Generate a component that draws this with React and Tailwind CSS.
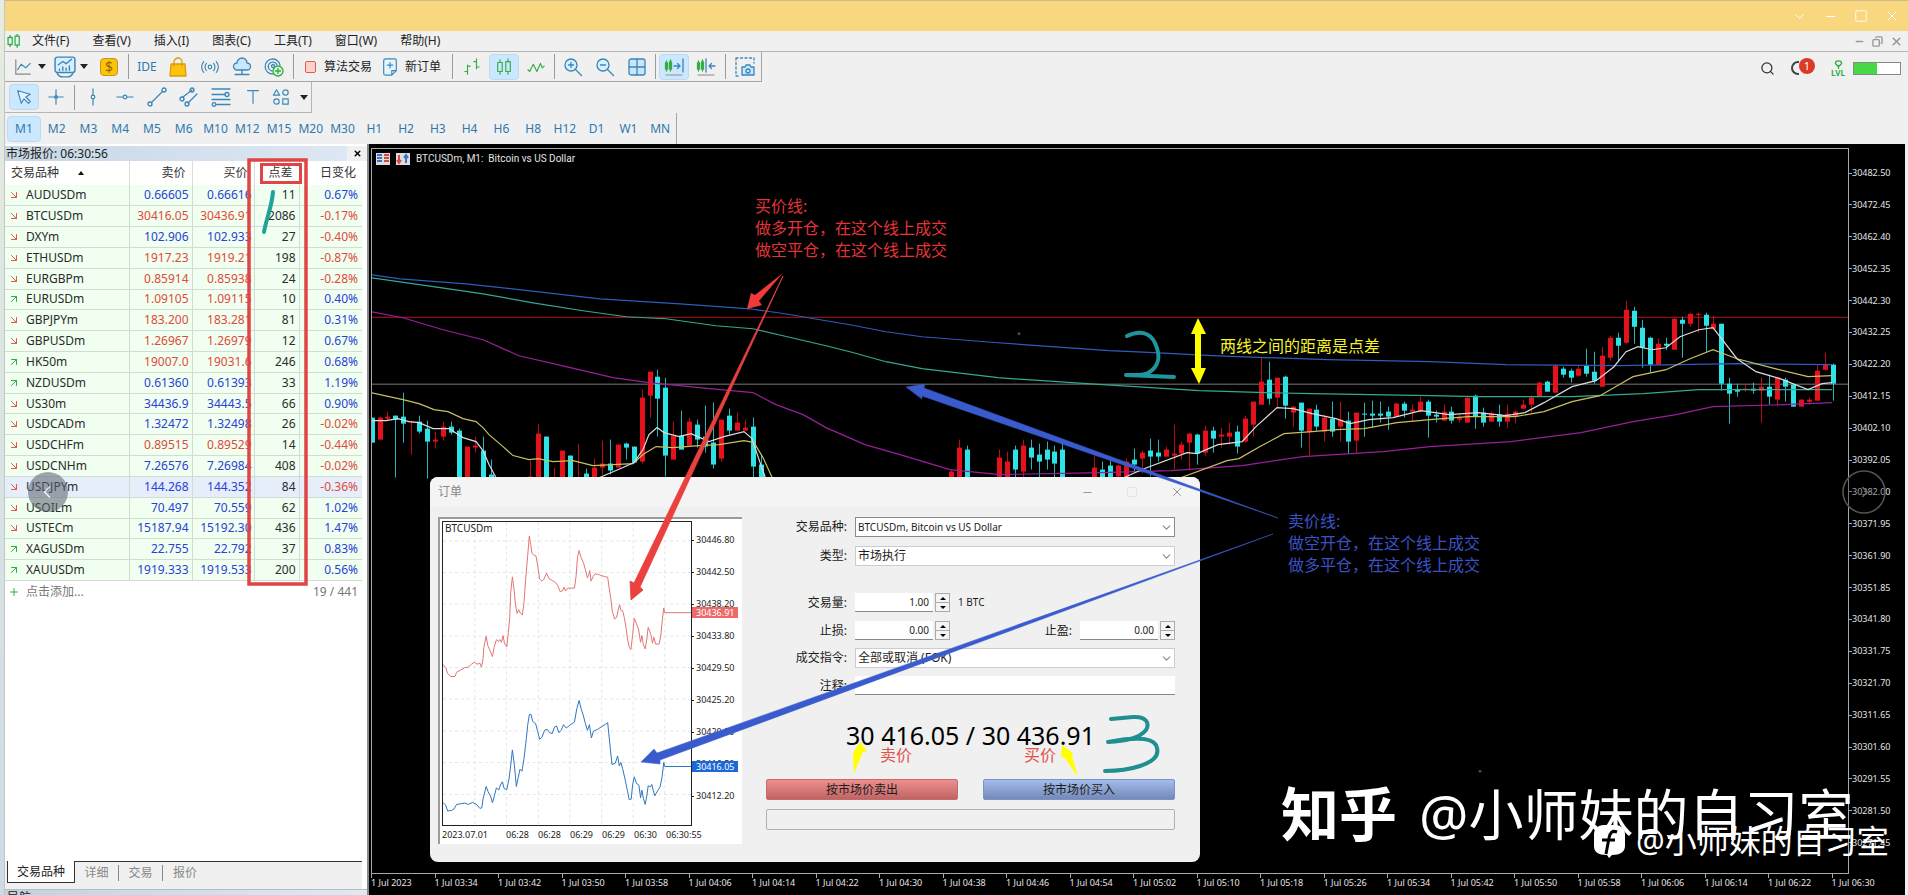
import React, { useState } from 'react';
import { ChevronDown, ChevronLeft, ChevronRight, Minus, Square, X, Copy, Search, ArrowDownRight, ArrowUpRight, Plus } from 'lucide-react';

const MENU = ['文件(F)', '查看(V)', '插入(I)', '图表(C)', '工具(T)', '窗口(W)', '帮助(H)'];
const TIMEFRAMES = ['M1', 'M2', 'M3', 'M4', 'M5', 'M6', 'M10', 'M12', 'M15', 'M20', 'M30', 'H1', 'H2', 'H3', 'H4', 'H6', 'H8', 'H12', 'D1', 'W1', 'MN'];

// symbol, direction, bid, ask, price colour, spread, daily change
const QUOTES = [
    ['AUDUSDm', 'down', '0.66605', '0.66616', 'blue', '11', '0.67%'],
    ['BTCUSDm', 'down', '30416.05', '30436.91', 'red', '2086', '-0.17%'],
    ['DXYm', 'down', '102.906', '102.933', 'blue', '27', '-0.40%'],
    ['ETHUSDm', 'down', '1917.23', '1919.21', 'red', '198', '-0.87%'],
    ['EURGBPm', 'down', '0.85914', '0.85938', 'red', '24', '-0.28%'],
    ['EURUSDm', 'up', '1.09105', '1.09115', 'red', '10', '0.40%'],
    ['GBPJPYm', 'down', '183.200', '183.281', 'red', '81', '0.31%'],
    ['GBPUSDm', 'down', '1.26967', '1.26979', 'red', '12', '0.67%'],
    ['HK50m', 'up', '19007.0', '19031.6', 'red', '246', '0.68%'],
    ['NZDUSDm', 'up', '0.61360', '0.61393', 'blue', '33', '1.19%'],
    ['US30m', 'down', '34436.9', '34443.5', 'blue', '66', '0.90%'],
    ['USDCADm', 'down', '1.32472', '1.32498', 'blue', '26', '-0.02%'],
    ['USDCHFm', 'down', '0.89515', '0.89529', 'red', '14', '-0.44%'],
    ['USDCNHm', 'down', '7.26576', '7.26984', 'blue', '408', '-0.02%'],
    ['USDJPYm', 'down', '144.268', '144.352', 'blue', '84', '-0.36%'],
    ['USOILm', 'down', '70.497', '70.559', 'blue', '62', '1.02%'],
    ['USTECm', 'down', '15187.94', '15192.30', 'blue', '436', '1.47%'],
    ['XAGUSDm', 'up', '22.755', '22.792', 'blue', '37', '0.83%'],
    ['XAUUSDm', 'up', '1919.333', '1919.533', 'blue', '200', '0.56%'],
];

const PRICES = ['30482.50', '30472.45', '30462.40', '30452.35', '30442.30', '30432.25', '30422.20', '30412.15', '30402.10', '30392.05', '30382.00', '30371.95', '30361.90', '30351.85', '30341.80', '30331.75', '30321.70', '30311.65', '30301.60', '30291.55', '30281.50', '30271.45'];

const TIMES = ['1 Jul 2023'];
for (let m = 3 * 60 + 34; m <= 6 * 60 + 30; m += 8) {
    TIMES.push(`1 Jul 0${Math.floor(m / 60)}:${String(m % 60).padStart(2, '0')}`);
}

// index, high, body top, body bottom, low, 1 = rising
const CANDLES = [
    [0, 418, 418, 443, 443, 0], [1, 417, 418, 440, 440, 1], [2, 412, 417, 419, 421, 1], [3, 416, 416, 420, 478, 0],
    [4, 393, 417, 424, 443, 0], [5, 421, 422, 423, 455, 1], [6, 416, 422, 432, 434, 0], [7, 421, 429, 442, 479, 0],
    [8, 432, 440, 442, 449, 1], [9, 422, 427, 437, 441, 1], [10, 422, 427, 433, 435, 0], [11, 429, 431, 480, 480, 0],
    [12, 447, 447, 480, 480, 1], [13, 437, 446, 448, 453, 1], [14, 437, 451, 480, 480, 0], [15, 460, 475, 480, 480, 0],
    [20, 461, 477, 480, 480, 1], [21, 424, 434, 480, 480, 1], [22, 437, 437, 480, 480, 0], [23, 468, 478, 480, 480, 1],
    [24, 451, 451, 480, 480, 1], [25, 456, 456, 480, 480, 0], [26, 444, 478, 480, 480, 1], [27, 469, 474, 480, 480, 0],
    [28, 459, 468, 480, 480, 1], [29, 441, 464, 468, 475, 1], [30, 440, 464, 471, 475, 0], [31, 445, 445, 468, 468, 1],
    [32, 443, 444, 448, 460, 0], [33, 447, 447, 463, 463, 0], [34, 390, 398, 462, 464, 1], [35, 372, 372, 396, 418, 1],
    [36, 370, 377, 399, 437, 0], [37, 378, 388, 456, 477, 0], [38, 422, 436, 460, 460, 1], [39, 411, 436, 450, 450, 0],
    [40, 418, 422, 446, 446, 1], [41, 420, 425, 440, 448, 0], [42, 406, 437, 447, 453, 0], [43, 403, 443, 465, 469, 0],
    [44, 420, 420, 459, 462, 1], [45, 409, 416, 431, 435, 0], [46, 413, 423, 431, 431, 1], [47, 420, 428, 431, 431, 1],
    [48, 418, 427, 467, 480, 0], [49, 455, 465, 480, 480, 0],
    [73, 470, 472, 480, 480, 1], [74, 440, 448, 480, 480, 1], [75, 446, 450, 480, 480, 0], [79, 450, 458, 480, 480, 1],
    [80, 452, 462, 480, 480, 1], [81, 446, 450, 470, 480, 0], [82, 440, 446, 472, 480, 1], [83, 440, 448, 458, 470, 0],
    [84, 444, 455, 462, 480, 0], [85, 442, 450, 460, 470, 0], [86, 446, 452, 464, 480, 0], [87, 440, 450, 480, 480, 0],
    [91, 455, 468, 480, 480, 1], [92, 462, 470, 480, 480, 0], [93, 458, 466, 480, 480, 0],
    [94, 465, 466, 477, 480, 1], [95, 459, 462, 480, 480, 1], [96, 449, 460, 465, 473, 0], [97, 451, 453, 459, 474, 1],
    [98, 439, 451, 457, 477, 0], [99, 440, 453, 457, 462, 0], [100, 447, 450, 457, 457, 1], [101, 425, 454, 456, 470, 1],
    [102, 442, 445, 454, 460, 1], [103, 433, 434, 443, 471, 1], [104, 434, 435, 454, 465, 0], [105, 426, 431, 453, 456, 1],
    [106, 427, 431, 439, 453, 0], [107, 428, 435, 437, 448, 1], [108, 423, 433, 437, 445, 1], [109, 426, 432, 447, 454, 0],
    [110, 416, 419, 442, 443, 1], [111, 402, 402, 425, 437, 1], [112, 357, 382, 405, 405, 1], [113, 362, 380, 399, 405, 0],
    [114, 378, 378, 398, 408, 1], [115, 376, 377, 406, 419, 0], [116, 406, 407, 413, 427, 1], [117, 403, 403, 431, 448, 0],
    [118, 409, 409, 432, 456, 1], [119, 405, 410, 427, 431, 0], [120, 415, 418, 432, 442, 1], [121, 402, 419, 432, 437, 0],
    [122, 402, 420, 427, 442, 1], [123, 412, 421, 442, 454, 0], [124, 413, 413, 441, 453, 1], [125, 403, 414, 415, 437, 0],
    [126, 401, 414, 416, 428, 0], [127, 402, 414, 416, 423, 0], [128, 407, 412, 417, 430, 0], [129, 403, 404, 417, 417, 1],
    [130, 402, 404, 411, 418, 0], [131, 405, 410, 412, 422, 1], [132, 397, 402, 412, 412, 1], [133, 400, 402, 416, 438, 0],
    [134, 411, 415, 417, 423, 0], [135, 405, 412, 421, 421, 1], [136, 407, 412, 421, 424, 0], [137, 415, 418, 420, 423, 1],
    [138, 398, 398, 423, 423, 1], [139, 395, 396, 417, 429, 0], [140, 408, 413, 423, 427, 0], [141, 412, 414, 422, 422, 1],
    [142, 405, 415, 422, 427, 0], [143, 405, 414, 422, 428, 1], [144, 411, 412, 417, 424, 1], [145, 400, 405, 409, 409, 1],
    [146, 396, 398, 405, 413, 1], [147, 382, 383, 397, 397, 1], [148, 381, 382, 392, 392, 0], [149, 365, 366, 393, 393, 1],
    [150, 367, 369, 375, 378, 0], [151, 369, 371, 378, 383, 0], [152, 366, 369, 376, 377, 1], [153, 349, 366, 374, 377, 0],
    [154, 352, 372, 381, 384, 0], [155, 347, 356, 387, 387, 1], [156, 336, 338, 358, 361, 1], [157, 333, 338, 346, 362, 0],
    [158, 301, 310, 343, 344, 1], [159, 307, 311, 327, 344, 0], [160, 320, 328, 348, 368, 0], [161, 337, 338, 365, 373, 0],
    [162, 339, 344, 365, 365, 1], [163, 338, 344, 346, 350, 0], [164, 318, 319, 350, 350, 1], [165, 317, 320, 324, 358, 0],
    [166, 313, 314, 324, 327, 1], [167, 313, 314, 315, 333, 1], [168, 313, 315, 326, 352, 0], [169, 316, 324, 329, 330, 1],
    [170, 324, 324, 384, 391, 0], [171, 378, 384, 394, 424, 0], [172, 384, 390, 392, 397, 0], [173, 385, 389, 390, 392, 1],
    [174, 383, 389, 391, 394, 0], [175, 378, 387, 391, 423, 1], [176, 375, 387, 397, 405, 0], [177, 377, 378, 400, 407, 1],
    [178, 378, 380, 387, 402, 0], [179, 385, 385, 407, 407, 0], [180, 399, 400, 407, 407, 1], [181, 398, 400, 402, 405, 1],
    [182, 365, 371, 401, 401, 1], [183, 353, 365, 370, 371, 1], [184, 364, 365, 384, 401, 0],
];

const AVERAGES = [
    ['#2f5cb8', '371,275 400,279 466,284 530,291 600,299 680,304 750,309 785,314 826,321 850,325 886,332 922,337 998,343 1109,351 1154,353 1212,356 1328,360 1430,362 1506,365 1619,366 1737,364 1832,365'],
    ['#35a893', '371,278 442,288 483,294 533,303 583,311 626,317 666,319 716,326 753,329 783,336 826,346 850,352 886,362 922,369 998,378 1087,384 1199,391 1266,393 1312,394 1430,396 1478,397 1572,397 1643,394 1699,390 1832,390'],
    ['#9a1f9c', '371,312 403,318 443,330 483,340 519,356 566,367 613,378 649,383 699,388 753,393 776,405 803,415 826,428 865,445 900,455 950,470 1000,475 1100,473 1171,471 1242,466 1303,457 1383,452 1430,447 1511,442 1581,433 1633,422 1676,415 1713,407 1784,405 1832,403'],
    ['#c8c060', '371,393 403,400 419,404 434,410 448,412 463,419 476,422 483,428 489,435 503,447 513,456 529,460 538,459 553,462 573,461 593,466 613,465 633,464 643,455 656,447 673,448 699,446 719,445 744,441 754,443 763,458 773,480'],
    ['#c8c060', '1176,480 1227,461 1239,459 1260,447 1284,434 1312,432 1336,430 1364,429 1397,423 1430,420 1468,417 1515,417 1544,412 1572,402 1600,396 1619,385 1633,377 1666,370 1690,359 1713,350 1737,359 1775,369 1808,377 1832,376'],
    ['#dcdcdc', '371,421 386,421 398,419 409,422 419,423 433,429 449,429 463,438 476,442 483,451 489,465 497,480'],
    ['#dcdcdc', '595,480 609,474 623,468 634,463 643,450 649,435 657,428 664,433 679,437 691,434 709,442 724,437 744,432 752,439 758,457 766,480'],
    ['#dcdcdc', '1120,480 1142,470 1187,453 1197,454 1218,445 1242,442 1256,427 1277,408 1293,409 1312,414 1336,419 1350,424 1369,420 1393,418 1421,411 1449,415 1478,413 1506,416 1525,413 1544,403 1572,387 1596,381 1614,367 1626,352 1638,347 1652,350 1666,348 1680,337 1699,330 1713,328 1723,341 1737,359 1756,372 1780,379 1808,390 1822,384 1832,383'],
];

const ASK_TICKS = '39,568 47,575 53,594 62,603 75,603 80,590 92,584 105,576 115,575 125,566 133,560 142,566 150,563 155,575 160,548 162,515 169,482 174,510 180,523 188,543 193,515 200,492 206,498 210,492 215,500 220,480 224,502 231,514 236,470 240,425 243,350 248,303 253,340 257,385 262,413 267,402 272,412 278,418 283,380 288,310 294,240 299,180 303,205 307,232 313,238 319,240 324,268 330,310 337,316 343,310 351,292 358,308 368,314 378,320 385,330 392,348 398,346 404,334 408,346 415,337 435,337 440,300 444,245 449,224 455,245 462,260 468,282 474,306 478,298 481,284 485,316 491,302 497,294 505,295 515,299 525,302 535,304 540,340 545,372 549,408 556,430 562,425 566,405 571,387 575,404 580,405 585,425 590,455 595,490 600,515 605,522 610,480 615,428 622,445 628,460 634,500 638,480 642,505 648,520 653,490 657,455 662,468 666,480 670,503 674,485 680,506 690,505 695,480 700,430 704,397 707,411 786,411';
const BID_TICKS = '39,982 47,990 53,1008 65,1006 72,1002 80,988 92,986 105,984 115,988 128,982 140,988 150,1000 156,998 160,970 169,934 175,950 182,963 188,983 193,965 200,938 207,945 212,930 218,920 223,940 231,944 238,910 243,870 248,824 254,870 260,934 265,910 271,882 277,888 283,850 290,790 294,750 299,718 304,717 309,738 318,745 324,768 330,792 337,786 345,765 353,762 360,772 368,775 375,755 381,752 388,772 395,765 402,748 410,758 420,750 435,740 442,700 449,675 455,700 462,722 468,745 474,765 480,748 486,788 492,768 505,762 515,755 528,747 535,742 541,800 548,868 558,864 565,842 570,872 575,862 580,880 588,915 595,950 600,974 606,972 610,930 615,905 622,925 629,930 634,968 638,945 643,972 648,988 653,962 657,932 664,935 668,928 672,945 677,962 685,948 693,935 699,905 704,862 707,874 786,874';
const TICK_PRICES = ['30446.80', '30442.50', '30438.20', '30433.80', '30429.50', '30425.20', '30420.90', '30416.50', '30412.20'];
const TICK_TIMES = ['2023.07.01', '', '06:28', '06:28', '06:29', '06:29', '06:30', '06:30:55'];

const Icon = ({ children, size = 20, color = '#3a86b8' }) => (
    <svg width={size} height={size} viewBox="0 0 20 20" fill="none" stroke={color} strokeWidth="1.3" strokeLinecap="round" strokeLinejoin="round" aria-hidden="true">
        {children}
    </svg>
);

const ToolButton = ({ label, active, children }) => (
    <button aria-label={label} className="flex h-[26px] w-8 shrink-0 items-center justify-center">
        <span className={`flex h-[26px] w-[30px] items-center justify-center rounded-sm ${active ? 'border border-[#b9dcf5] bg-[#cce8ff]' : ''}`}>{children}</span>
    </button>
);

const Caret = () => (
    <button aria-label="more" className="flex h-[26px] w-3.5 shrink-0 items-center justify-center">
        <span className="border-x-4 border-t-[5px] border-x-transparent border-t-[#222]"></span>
    </button>
);

const Separator = ({ tight }) => <span className={`h-[25px] w-px shrink-0 bg-[#9a9a9a] ${tight ? 'mx-0.5' : 'mx-[3px]'}`}></span>;

const Toolbars = () => {
    const [frame, setFrame] = useState('M1');

    return (
        <div className="relative shrink-0 bg-[#f0f0f0]">
            {/* Standard toolbar */}
            <div className="flex h-[30px] w-[757px] items-center border-r border-b border-[#a5a5a5] pl-1.5">
                <button aria-label="Line chart" className="flex w-[26px] justify-center">
                    <Icon size={18}><path d="M2 2v16h16" stroke="#888" /><path d="M4 13l4-6 5 4 5-5" /></Icon>
                </button>
                <Caret />
                <button aria-label="Template" className="ml-[3px] flex w-[26px] justify-center">
                    <Icon size={22}><rect x="1" y="1" width="18" height="14" rx="2" fill="#d9efff" /><path d="M4 8l4-3 3 2 5-4M5 13v-1M8 13v-3M11 13v-2M14 13v-4M3 16c1 2 3 3 5 3h4c2 0 4-1 5-3" /></Icon>
                </button>
                <Caret />
                <span className="w-0.5 shrink-0"></span>
                <ToolButton label="Deposit">
                    <span className="flex h-[18px] w-[18px] items-center justify-center rounded-sm border border-[#c99414] bg-[#fcc30b] text-sm leading-none text-[#8f6508]">$</span>
                </ToolButton>
                <Separator />
                <button className="w-8 text-xs text-[#2f78ad]">IDE</button>
                <ToolButton label="Market"><Icon color="#d79c0b"><path d="M3 7h14l1 12H2z" fill="#fcc30b" /><path d="M6 9V5a4 4 0 0 1 8 0v4" /></Icon></ToolButton>
                <ToolButton label="Signals"><Icon size={18}><circle cx="10" cy="10" r="2" /><path d="M6 6c-2 2-2 6 0 8M14 6c2 2 2 6 0 8M3 4c-3 4-3 8 0 12M17 4c3 4 3 8 0 12" /></Icon></ToolButton>
                <ToolButton label="VPS"><Icon><path d="M5 13a3.500 3.500 0 0 1 0-7 5 5 0 0 1 10 0 3.500 3.500 0 0 1 0 7z" fill="#cbe6fa" /><path d="M10 13v4M3 17.500h14" /></Icon></ToolButton>
                <ToolButton label="Community"><Icon><path d="M9 17A7.500 7.500 0 1 1 16 8M8 14A4.500 4.500 0 1 1 13 8" /><circle cx="9" cy="9" r="1.500" /><circle cx="14" cy="14" r="5" fill="#dff7df" stroke="#2eab3c" /><path d="M14 11.500v5M11.500 14h5" stroke="#2eab3c" /></Icon></ToolButton>
                <Separator />
                <button className="flex w-20 shrink-0 items-center gap-2 pl-2 text-xs whitespace-nowrap text-[#222]">
                    <span className="h-3 w-[11px] rounded-xs border border-[#e0594d] bg-[#fbd3cd]"></span>算法交易
                </button>
                <button className="flex w-[72px] shrink-0 items-center gap-1.5 pl-1 text-xs whitespace-nowrap text-[#222]">
                    <Icon size={18}><path d="M3 3a2 2 0 0 1 2-2h10a2 2 0 0 1 2 2v11l-5 5H5a2 2 0 0 1-2-2zM12 19v-5h5" fill="#e8f4fd" /><path d="M10 5v6M7 8h6" /></Icon>新订单
                </button>
                <Separator />
                <ToolButton label="Bars"><Icon size={18} color="#35ad45"><path d="M5 8v10M2 15h3M5 9h3M15 1v11M12 4h3M15 10h3" /></Icon></ToolButton>
                <ToolButton label="Candles" active><Icon size={18} color="#35ad45"><path d="M5.500 2v3M5.500 15v3M14.500 1v3M14.500 15v3" /><rect x="3" y="5" width="5" height="10" /><rect x="12" y="4" width="5" height="11" /></Icon></ToolButton>
                <ToolButton label="Line"><Icon size={18} color="#35ad45"><path d="M1 13l2 2 4-8 4 8 4-9 2 5 2-2" /></Icon></ToolButton>
                <Separator tight />
                <ToolButton label="Zoom in"><Icon><circle cx="8" cy="8" r="6" fill="#d9efff" /><path d="M12.500 12.500l6 6M8 5.500v5M5.500 8h5" /></Icon></ToolButton>
                <ToolButton label="Zoom out"><Icon><circle cx="8" cy="8" r="6" fill="#d9efff" /><path d="M12.500 12.500l6 6M5.500 8h5" /></Icon></ToolButton>
                <ToolButton label="Tile windows"><Icon><rect x="2" y="2" width="16" height="16" rx="2" fill="#cbe6fa" /><path d="M10 2v16M2 10h16" /></Icon></ToolButton>
                <Separator tight />
                <ToolButton label="Auto scroll" active><Icon><path d="M2.500 4v10M6.500 3v11M1.500 6h2v6h-2zM5.500 5h2v7h-2z" stroke="#35ad45" /><path d="M10 9h6M13.500 6.500L16 9l-2.500 2.500M19 2v13" /><path d="M2 18h16" stroke="#aaa" /></Icon></ToolButton>
                <ToolButton label="Chart shift"><Icon><path d="M2.500 4v10M6.500 3v11M1.500 6h2v6h-2zM5.500 5h2v7h-2z" stroke="#35ad45" /><path d="M19 9h-6M15.500 6.500L13 9l2.500 2.500M10 2v13" /><path d="M2 18h16" stroke="#aaa" /></Icon></ToolButton>
                <Separator />
                <ToolButton label="Screenshot"><Icon><path d="M1 1h18v5M1 1v18h4" strokeDasharray="2 2.500" /><path d="M7 10h3l1-2h4l1 2h3v8H7z" fill="#cbe6fa" /><circle cx="13" cy="14" r="2" /></Icon></ToolButton>
            </div>

            {/* Drawing tools */}
            <div className="flex h-[31px] w-[307px] items-center border-r border-b border-[#b5b5b5] pl-[3px]">
                <ToolButton label="Cursor" active><Icon size={18}><path d="M3 3l4 14 3-5 5 5 2-2-5-5 5-3z" fill="#e4f3ff" /></Icon></ToolButton>
                <ToolButton label="Crosshair"><Icon size={18}><path d="M10 2v16M2 10h16" /><circle cx="10" cy="10" r="1.500" /></Icon></ToolButton>
                <Separator tight />
                <ToolButton label="Vertical line"><Icon size={18}><path d="M10 1v7M10 12v7" /><circle cx="10" cy="10" r="2" /></Icon></ToolButton>
                <ToolButton label="Horizontal line"><Icon size={18}><path d="M1 10h7M12 10h7" /><circle cx="10" cy="10" r="2" /></Icon></ToolButton>
                <ToolButton label="Trend line"><Icon><path d="M4.500 15.500l11-11" /><circle cx="3" cy="17" r="2" /><circle cx="17" cy="3" r="2" /></Icon></ToolButton>
                <ToolButton label="Channel"><Icon><path d="M4 10l9-7M9 16l9-9" /><circle cx="3" cy="12" r="2" /><circle cx="13" cy="3" r="2" /><circle cx="8" cy="17" r="2" /></Icon></ToolButton>
                <ToolButton label="Fibonacci"><Icon><path d="M1 2h18M1 7.500h13M1 12.500h18M5 17.500h14" /><circle cx="16" cy="7.500" r="2" /><circle cx="3" cy="17.500" r="1.800" /></Icon></ToolButton>
                <ToolButton label="Text"><Icon size={18}><path d="M4 3h12M10 3v14" /></Icon></ToolButton>
                <span className="-ml-1 flex items-center">
                    <ToolButton label="Shapes"><Icon size={18}><path d="M5 2l3.500 6h-7z" /><circle cx="15" cy="5" r="3" /><circle cx="5" cy="15" r="3" /><rect x="12" y="12" width="6" height="6" /></Icon></ToolButton>
                    <Caret />
                </span>
            </div>

            {/* Timeframes */}
            <div className="flex h-[31px] w-[672px] items-center border-r border-[#a5a5a5] pl-0.5">
                {TIMEFRAMES.map((item) => (
                    <button
                        key={item}
                        onClick={() => setFrame(item)}
                        className={`h-[26px] flex-1 rounded-sm text-xs text-[#2f78ad] ${frame === item ? 'border border-[#b9dcf5] bg-[#cce8ff]' : ''}`}
                    >
                        {item}
                    </button>
                ))}
            </div>

            {/* Account status */}
            <div className="absolute top-1 right-[7px] flex h-6 items-center gap-4 text-[#333]">
                <button aria-label="Search"><Search size={15} /></button>
                <button aria-label="Notifications" className="flex items-center">
                    <span className="h-3.5 w-2 rounded-l-full border-2 border-r-0 border-[#444]"></span>
                    <span className="mb-1 flex h-4 w-4 items-center justify-center rounded-full bg-[#db3a26] text-[11px] text-white">1</span>
                </button>
                <span className="flex flex-col items-center text-[8px] leading-[8px] font-bold text-[#35ad45]">
                    <Icon size={9} color="#35ad45"><path d="M10 19v-7M3 8a7 6 0 1 1 14 0l-7 7z" strokeWidth="3" /></Icon>
                    LVL
                </span>
                <span className="-ml-2 flex h-[13px] w-12 border border-[#888] bg-white"><span className="w-1/2 bg-[#45d945]"></span></span>
            </div>
        </div>
    );
};

const MarketWatch = () => (
    <aside className="flex w-[362px] shrink-0 flex-col overflow-hidden bg-white text-xs">
        <div className="mt-0.5 flex h-[15px] shrink-0 items-center justify-between bg-gradient-to-r from-[#c8d6e4] to-[#dfe9f5] pl-px">
            <h2 className="leading-none text-[#222]">市场报价: 06:30:56</h2>
            <button aria-label="Close" className="flex h-full w-5 items-center justify-center bg-[#f0f0f0] text-black"><X size={9} strokeWidth={4} /></button>
        </div>
        <table className="h-[420px] w-[357px] table-fixed border-collapse">
            <thead>
                <tr className="h-6 text-[#333]">
                    <th className="w-[124px] border-r border-[#ddd] pl-1.5 text-left font-normal">
                        <span className="flex items-center gap-[19px]">交易品种<span className="border-x-[3px] border-b-[4px] border-x-transparent border-b-[#111]"></span></span>
                    </th>
                    <th className="w-[63px] border-r border-[#ddd] pr-1.5 text-right font-normal">卖价</th>
                    <th className="w-[62px] border-r border-[#ddd] pr-1.5 text-right font-normal">买价</th>
                    <th className="w-[45px] border-r border-[#ddd] pr-1.5 text-right font-normal">点差</th>
                    <th className="pr-1.5 text-right font-normal">日变化</th>
                </tr>
            </thead>
            <tbody>
                {QUOTES.map(([symbol, dir, bid, ask, tone, spread, change]) => {
                    const price = tone === 'blue' ? 'text-[#2b41d6]' : 'text-[#df4a3c]';
                    return (
                        <tr key={symbol} className={`h-5 border-b border-[#d2dcd2] leading-none ${symbol === 'USDJPYm' ? 'bg-[#e6eefb]' : 'bg-[#f0fff0]'}`}>
                            <td className="border-r border-[#d2dcd2] pl-[3px] text-[#2b2b2b]">
                                <span className="flex items-center gap-1.5">
                                    {dir === 'up' ? <ArrowUpRight size={12} className="text-[#2fae46]" /> : <ArrowDownRight size={12} className="text-[#df5a4c]" />}
                                    {symbol}
                                </span>
                            </td>
                            <td className={`border-r border-[#d2dcd2] pr-[3px] text-right ${price}`}>{bid}</td>
                            <td className={`border-r border-[#d2dcd2] pr-0.5 text-right ${price}`}>{ask}</td>
                            <td className="border-r border-[#d2dcd2] pr-[3px] text-right text-[#2b2b2b]">{spread}</td>
                            <td className={`pr-1 text-right ${change.startsWith('-') ? 'text-[#df4a3c]' : 'text-[#2b41d6]'}`}>{change}</td>
                        </tr>
                    );
                })}
            </tbody>
        </table>
        <div className="flex h-[22px] w-[357px] items-center justify-between pr-1 pl-[3px] text-[#777]">
            <button className="flex items-center gap-1.5"><Plus size={12} className="text-[#2fae46]" />点击添加...</button>
            <span>19 / 441</span>
        </div>
        <div className="flex-1"></div>
        <div className="flex h-7 w-[357px] shrink-0 bg-[#f0f0f0] text-[#888]">
            <button className="ml-0.5 h-[22px] w-[68px] border border-t-0 border-[#333] bg-white text-[#222]">交易品种</button>
            <div className="flex flex-1 items-start border-t border-[#333] pt-[3px] leading-4">
                <button className="w-11 border-r border-[#888]">详细</button>
                <button className="w-11 border-r border-[#888]">交易</button>
                <button className="w-11">报价</button>
            </div>
        </div>
        <div className="h-1.5 w-full shrink-0 overflow-hidden border-t border-[#bbb] bg-gradient-to-r from-[#bfd3e2] to-[#dfe9f5] pl-0.5 leading-4 text-[#222]">导航</div>
    </aside>
);

const Plot = () => (
    <svg className="h-full w-full" viewBox="372 149 1476 725" preserveAspectRatio="none" aria-hidden="true">
        <path d="M372 384.500h1476" stroke="#777" />
        <path d="M372 317.500h1476" stroke="#b3161c" />
        {CANDLES.map(([i, high, top, bottom, low, up]) => {
            const x = Math.round(371.6 + i * 7.94);
            const color = up ? '#e5121b' : '#2de3e6';
            return (
                <g key={i} fill={color}>
                    <rect x={x} y={high} width="1" height={low - high} opacity="0.8" />
                    <rect x={x - 2} y={top} width="5" height={Math.max(bottom - top, 1)} />
                </g>
            );
        })}
        {AVERAGES.map(([color, points], i) => (
            <polyline key={i} points={points} fill="none" stroke={color} strokeWidth="1.200" />
        ))}
        <circle cx="1019" cy="334" r="1.500" fill="#2c5357" />
        <circle cx="1480" cy="772" r="1.500" fill="#2c5357" />
    </svg>
);

const ChartWindow = () => (
    <section className="flex min-w-0 flex-1 flex-col border-l-2 border-[#8a8a8a] bg-black pt-1 pl-0.5 text-[9px] text-[#e4e4e4]">
        <div className="flex min-h-0 flex-1">
            <div className="relative min-w-0 flex-1 border border-[#a8a8a8]">
                <Plot />
                <div className="absolute top-0.5 left-1 flex items-center gap-1.5 font-[Roboto,'Noto_Sans',sans-serif] text-[10px] leading-4">
                    <svg width="14" height="12" viewBox="0 0 14 12" aria-hidden="true"><rect width="14" height="12" fill="#ddd" /><path d="M1 2h5M1 5h5M1 8h5" stroke="#3b6fd0" strokeWidth="2" /><path d="M8 2h5M8 5h5M8 8h5" stroke="#d84a40" strokeWidth="2" /></svg>
                    <svg width="14" height="12" viewBox="0 0 14 12" aria-hidden="true"><rect width="14" height="12" fill="#ddd" /><path d="M3 2v8M1 7l2 3 2-3" stroke="#d84a40" strokeWidth="2" fill="none" /><path d="M10 10V2M8 5l2-3 2 3" stroke="#3b6fd0" strokeWidth="2" fill="none" /></svg>
                    BTCUSDm, M1:&nbsp; Bitcoin vs US Dollar
                </div>
            </div>
            <ul className="flex w-[56px] flex-col justify-between pt-[17px] pb-[23px]">
                {PRICES.map((price) => (
                    <li key={price} className="flex items-center leading-4 before:h-px before:w-[3px] before:bg-[#a8a8a8]">{price}</li>
                ))}
            </ul>
        </div>
        <ul className="flex h-[21px] shrink-0 pr-[10px]">
            {TIMES.map((time) => (
                <li key={time} className="flex-1 whitespace-nowrap leading-[18px] before:block before:-mb-1 before:h-1 before:w-px before:bg-[#a8a8a8]">{time}</li>
            ))}
        </ul>
    </section>
);

const TickChart = () => (
    <div className="flex w-[304px] shrink-0 flex-col border-t-2 border-l-2 border-[#9b9b9b] bg-white pt-0.5 pb-0.5 pl-0.5 text-[9px] text-[#222]">
        <div className="flex">
            <div className="relative h-[305px] w-[250px] border border-[#222]">
                <svg className="h-full w-full" viewBox="39 138 747 912" preserveAspectRatio="none" aria-hidden="true">
                    <path d="M135 138v912M230 138v912M326 138v912M421 138v912M517 138v912M612 138v912M707 138v912M39 195h747M39 290h747M39 385h747M39 481h747M39 576h747M39 671h747M39 767h747M39 862h747M39 958h747" stroke="#d8d8d8" strokeWidth="2" strokeDasharray="9 9" />
                    <polyline points={ASK_TICKS} fill="none" stroke="#e07572" strokeWidth="3" />
                    <polyline points={BID_TICKS} fill="none" stroke="#2f74c0" strokeWidth="3" />
                </svg>
                <span className="absolute top-0 left-0.5 text-[10px] leading-3">BTCUSDm</span>
            </div>
            <ul className="relative flex flex-1 flex-col justify-between pt-[13px] pb-[24px]">
                {TICK_PRICES.map((price) => (
                    <li key={price} className="flex items-center gap-0.5 leading-3 before:h-px before:w-0.5 before:bg-[#222]">{price}</li>
                ))}
                <li className="absolute top-[86px] left-0 w-[46px] bg-[#ee6a6a] pl-1 leading-[11px] text-white">30436.91</li>
                <li className="absolute top-[240px] left-0 w-[46px] bg-[#1c68d8] pl-1 leading-[11px] text-white">30416.05</li>
            </ul>
        </div>
        <ul className="flex w-[256px] pt-0.5 leading-[14px]">
            {TICK_TIMES.map((time, i) => (
                <li key={i} className="w-8 shrink-0 whitespace-nowrap">{time}</li>
            ))}
        </ul>
    </div>
);

const Field = ({ id, label, className = '', children }) => (
    <div className={`flex items-center gap-2 ${className}`}>
        <label htmlFor={id} className="w-[81px] shrink-0 text-right text-xs leading-4">{label}</label>
        {children}
    </div>
);

const Select = ({ id, value, className }) => (
    <div className="relative flex flex-1">
        <select id={id} className={`h-5 w-full appearance-none bg-white px-0.5 leading-4 ${className}`}>
            <option>{value}</option>
        </select>
        <ChevronDown size={13} strokeWidth={2} className="pointer-events-none absolute top-1 right-0.5 text-[#888]" />
    </div>
);

const Stepper = ({ id, value }) => (
    <div className="flex gap-0.5">
        <input id={id} defaultValue={value} className="h-[19px] w-[78px] border-b border-[#888] bg-white pr-1 text-right text-[10px]" />
        <span className="flex h-[19px] w-[15px] flex-col">
            <button aria-label="Increase" className="flex flex-1 items-center justify-center border border-[#aaa] bg-[#f4f4f4]"><span className="border-x-[3px] border-b-[3px] border-x-transparent border-b-black"></span></button>
            <button aria-label="Decrease" className="flex flex-1 items-center justify-center border border-t-0 border-[#aaa] bg-[#f4f4f4]"><span className="border-x-[3px] border-t-[3px] border-x-transparent border-t-black"></span></button>
        </span>
    </div>
);

const OrderDialog = () => (
    <div role="dialog" aria-label="订单" className="absolute top-[477px] left-[430px] w-[770px] overflow-hidden rounded-lg bg-[#f0f0f0] pb-[18px] text-[#1c1c1c]">
        <div className="flex h-[30px] items-center bg-[#f4f4f4] pr-4 pl-2 text-[#888]">
            <h2 className="flex-1 text-xs">订单</h2>
            <div className="flex gap-8">
                <button aria-label="Minimize"><Minus size={13} strokeWidth={1.5} /></button>
                <button aria-label="Maximize" className="text-[#ddd]"><Square size={12} strokeWidth={1.5} /></button>
                <button aria-label="Close"><X size={14} strokeWidth={1.5} /></button>
            </div>
        </div>
        <div className="flex justify-between pt-[10px] pr-[25px] pl-2">
            <TickChart />
            <form className="flex w-[409px] flex-col" onSubmit={(e) => e.preventDefault()}>
                <Field id="symbol" label="交易品种:"><Select id="symbol" value="BTCUSDm, Bitcoin vs US Dollar" className="border border-[#8a8a8a] text-[10px]" /></Field>
                <Field id="type" label="类型:" className="mt-[9px]"><Select id="type" value="市场执行" className="border border-[#ccc] text-xs" /></Field>
                <Field id="volume" label="交易量:" className="mt-[27px]"><Stepper id="volume" value="1.00" /><span className="text-[10px]">1 BTC</span></Field>
                <div className="mt-[9px] flex justify-between">
                    <Field id="sl" label="止损:"><Stepper id="sl" value="0.00" /></Field>
                    <Field id="tp" label="止盈:"><Stepper id="tp" value="0.00" /></Field>
                </div>
                <Field id="fill" label="成交指令:" className="mt-2"><Select id="fill" value="全部或取消 (FOK)" className="border border-[#ccc] text-xs" /></Field>
                <Field id="comment" label="注释:" className="mt-2"><input id="comment" className="h-[19px] min-w-0 flex-1 border-b border-[#888] bg-white px-1 text-xs" /></Field>
                <p className="mt-6 text-center text-[25px] leading-8 text-black">30 416.05 / 30 436.91</p>
                <div className="mt-7 flex gap-[25px] text-xs">
                    <button className="h-[21px] flex-1 rounded-xs border border-[#c86a6a] bg-gradient-to-b from-[#ee8f8f] to-[#bf6464]">按市场价卖出</button>
                    <button className="h-[21px] flex-1 rounded-xs border border-[#7d92c4] bg-gradient-to-b from-[#a4bdec] to-[#7489b8]">按市场价买入</button>
                </div>
                <div className="mt-[9px] h-[21px] rounded-xs border border-[#b0b0b0]"></div>
            </form>
        </div>
    </div>
);

const Annotations = () => (
    <div className="pointer-events-none absolute inset-0 text-base leading-[22px]">
        <svg className="absolute inset-0 h-full w-full" viewBox="0 0 1908 895" preserveAspectRatio="none" aria-hidden="true">
            <rect x="249" y="160" width="57" height="424" fill="none" stroke="#e04545" strokeWidth="3.500" />
            <rect x="261.500" y="164.500" width="39" height="18" fill="none" stroke="#e04545" strokeWidth="3" />
            <path d="M273 192c-1 14-7 28-9 40" stroke="#1fa396" strokeWidth="4" strokeLinecap="round" fill="none" />
            <path d="M783 273l-24 28 3 4-15 4 4-16 4 2z" fill="#f23a3c" />
            <path d="M783 276L640 587l3 3-12 10-1-19 4 2z" fill="#ea403e" stroke="#ea403e" strokeWidth="0.800" />
            <path d="M906 387l19-3-1 4 354 130-356-122v3z" fill="#3a5bcd" stroke="#3a5bcd" strokeWidth="0.500" />
            <path d="M641 762l13-13 3 4 616-219-613 226v4z" fill="#3a5bcd" stroke="#3a5bcd" strokeWidth="0.500" />
            <path d="M1198 318l8 16h-5v34h5l-7 16-8-16h4v-34h-4z" fill="#ffff00" />
            <path d="M1127 336C1139 330 1150 332 1155 343C1161 356 1159 367 1148 373C1142 376 1132 375 1126 375L1174 377" stroke="#1f959d" strokeWidth="4" strokeLinecap="round" strokeLinejoin="round" fill="none" />
            <path d="M1111 719L1133 717C1146 716 1150 723 1146 730C1139 739 1124 741 1108 742C1130 738 1151 736 1156 745C1161 756 1152 762 1140 766C1128 770 1117 771 1105 771" stroke="#1f8f92" strokeWidth="4" strokeLinecap="round" strokeLinejoin="round" fill="none" />
            <path d="M860 742l7 10h-4l-9 21-1-20z" fill="#ffff00" />
            <path d="M1062 745l11 8-1 3 6 21-14-20h-3z" fill="#ffff00" />
            <circle cx="48" cy="492" r="20" fill="#55606b" opacity="0.550" />
            <circle cx="1864" cy="492" r="21" fill="#000" fillOpacity="0.300" stroke="#555" strokeWidth="1.500" />
        </svg>
        <ChevronLeft size={20} className="absolute top-[482px] left-[37px] text-white/80" />
        <ChevronRight size={18} className="absolute top-[483px] left-[1856px] text-[#666]" />
        <p className="absolute top-[195px] left-[755px] text-[#e03438]">买价线:<br />做多开仓，在这个线上成交<br />做空平仓，在这个线上成交</p>
        <p className="absolute top-[335px] left-[1220px] text-[#f3f32a]">两线之间的距离是点差</p>
        <p className="absolute top-[510px] left-[1288px] text-[#3c52c4]">卖价线:<br />做空开仓，在这个线上成交<br />做多平仓，在这个线上成交</p>
        <p className="absolute top-[744px] left-[880px] text-[#e0524c]">卖价</p>
        <p className="absolute top-[744px] left-[1024px] text-[#e0524c]">买价</p>
        <div className="absolute top-[784px] left-[1281px] flex items-center gap-[22px] whitespace-nowrap text-white">
            <span className="text-[58px] leading-[60px] font-bold">知乎</span>
            <span className="text-[55px] leading-[60px]">@小师妹的自习室</span>
        </div>
        <div className="absolute top-[823px] left-[1594px] flex items-center gap-[11px] whitespace-nowrap text-[32px] leading-9 text-white">
            <svg width="31" height="34" viewBox="0 0 31 34" aria-hidden="true"><path d="M9 1h13a9 9 0 0 1 9 9v12c0 6-5 9-13 9l-3 3-2-3C4 31 0 28 0 22V10a9 9 0 0 1 9-9z" fill="#fff" /><path d="M23 8c-5-2-7 1-8 6l-3 16M8 16h13" stroke="#000" strokeWidth="3" fill="none" /></svg>
            @小师妹的自习室
        </div>
    </div>
);

const App = () => (
    <div className="relative flex h-screen overflow-hidden bg-[#f0f0f0] font-['Noto_Sans','Noto_Sans_CJK_SC',sans-serif]">
        <div className="w-[5px] shrink-0 border-r border-[#c5c5c5] bg-gradient-to-b from-[#e6ecdf] to-[#cddbe6]"></div>
        <div className="flex min-w-0 flex-1 flex-col">
            {/* Title bar */}
            <header className="flex h-[31px] shrink-0 items-center justify-end gap-4 border-t border-[#cdb98c] bg-[#f8d77f] pr-2 text-white">
                <button aria-label="Collapse"><ChevronDown size={15} strokeWidth={1.5} /></button>
                <button aria-label="Minimize"><Minus size={15} strokeWidth={1.5} /></button>
                <button aria-label="Maximize"><Square size={14} strokeWidth={1.5} /></button>
                <button aria-label="Close"><X size={16} strokeWidth={1.5} /></button>
            </header>

            {/* Menu bar */}
            <nav className="flex h-[21px] shrink-0 items-center border-b border-[#b5b5b5] pr-[5px] pl-0.5 text-xs text-[#222]">
                <Icon size={14} color="#2eb04a"><path d="M4.500 2v3M4.500 15v3M14.500 0v3M14.500 16v3" strokeWidth="1.800" /><rect x="1.500" y="5" width="6" height="10" strokeWidth="1.800" /><rect x="11.500" y="3" width="6" height="13" strokeWidth="1.800" /></Icon>
                <div className="flex flex-1 gap-[23px] pl-[11px]">
                    {MENU.map((item) => (
                        <button key={item} className="leading-4">{item}</button>
                    ))}
                </div>
                <div className="flex gap-[7px] text-[#999]">
                    <button aria-label="Minimize chart"><Minus size={11} strokeWidth={3} /></button>
                    <button aria-label="Restore chart"><Copy size={11} strokeWidth={3} className="-scale-x-100" /></button>
                    <button aria-label="Close chart"><X size={13} strokeWidth={3} /></button>
                </div>
            </nav>

            <Toolbars />

            <main className="flex min-h-0 flex-1 pr-[3px]">
                <MarketWatch />
                <ChartWindow />
            </main>
        </div>

        <OrderDialog />
        <Annotations />
    </div>
);

export default App;
